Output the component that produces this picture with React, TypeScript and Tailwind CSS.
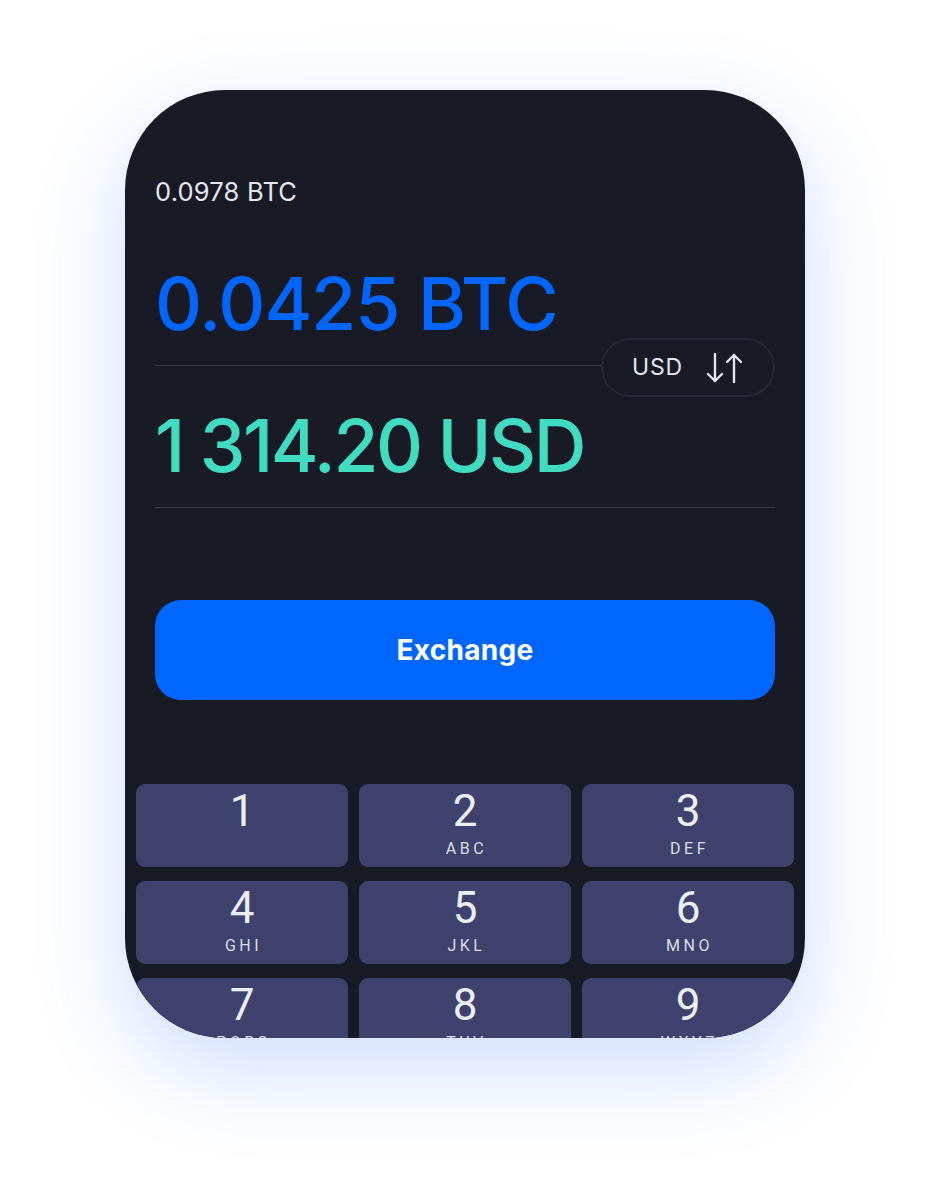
const keys = [
  { d: "1", l: "" },
  { d: "2", l: "ABC" },
  { d: "3", l: "DEF" },
  { d: "4", l: "GHI" },
  { d: "5", l: "JKL" },
  { d: "6", l: "MNO" },
  { d: "7", l: "PQRS" },
  { d: "8", l: "TUV" },
  { d: "9", l: "WXYZ" },
];

function SwapArrows() {
  return (
    <svg width="40" height="34" viewBox="0 0 40 34" fill="none" stroke="#e4e6ee" strokeWidth="2.4" strokeLinecap="round" strokeLinejoin="round">
      <path d="M10 3v27" />
      <path d="M3 23l7 7 7-7" />
      <path d="M29 31V4" />
      <path d="M22 11l7-7 7 7" />
    </svg>
  );
}

export default function App() {
  return (
    <div className="w-[930px] h-[1199px] bg-white flex justify-center pt-[90px] font-['Inter',sans-serif]">
      <div className="w-[680px] h-[948px] rounded-[100px] bg-[#181a26] overflow-hidden shadow-[0_30px_90px_rgba(40,110,255,0.24)] flex flex-col">
        <div className="px-[30px]">
          <div className="mt-[87px] text-[25.5px] leading-[30px] text-[#e6e7ec] tracking-[0.2px]">0.0978 BTC</div>

          <div className="mt-[57px] text-[73px] leading-[80px] font-medium text-[#0066ff] tracking-[-1px]">0.0425 BTC</div>
          <div className="relative mt-[21px] h-px bg-[#3a3c4b] mr-[174px]">
            <div className="absolute left-full top-[-27px] w-[174px] h-[59px] rounded-full border-2 border-[#262938] flex items-center pl-[29px] gap-[22px] bg-[#181a26]">
              <span className="text-[23px] tracking-[0.8px] text-[#e4e6ee]">USD</span>
              <SwapArrows />
            </div>
          </div>

          <div className="mt-[40px] text-[73px] leading-[80px] font-medium text-[#40dcc1] tracking-[-2.5px]">1 314.20 USD</div>
          <div className="mt-[21px] h-px bg-[#3a3c4b]" />

          <button className="mt-[92px] w-full h-[100px] rounded-[26px] bg-[#0066ff] text-white text-[28px] font-bold tracking-[0.3px]">
            Exchange
          </button>
        </div>

        <div className="mt-[84px] px-[11px] grid grid-cols-3 gap-x-[11px] gap-y-[14px] font-['Roboto',sans-serif]">
          {keys.map((k) => (
            <div key={k.d} className="h-[83px] rounded-[9px] bg-[#3e426d] flex flex-col items-center pt-[5px]">
              <span className="text-[44px] leading-[44px] text-[#eceef6]">{k.d}</span>
              <span className="mt-[7px] text-[16px] leading-[18px] tracking-[3.5px] text-[#dcdee8] pl-[3px]">{k.l}</span>
            </div>
          ))}
        </div>
      </div>
    </div>
  );
}
